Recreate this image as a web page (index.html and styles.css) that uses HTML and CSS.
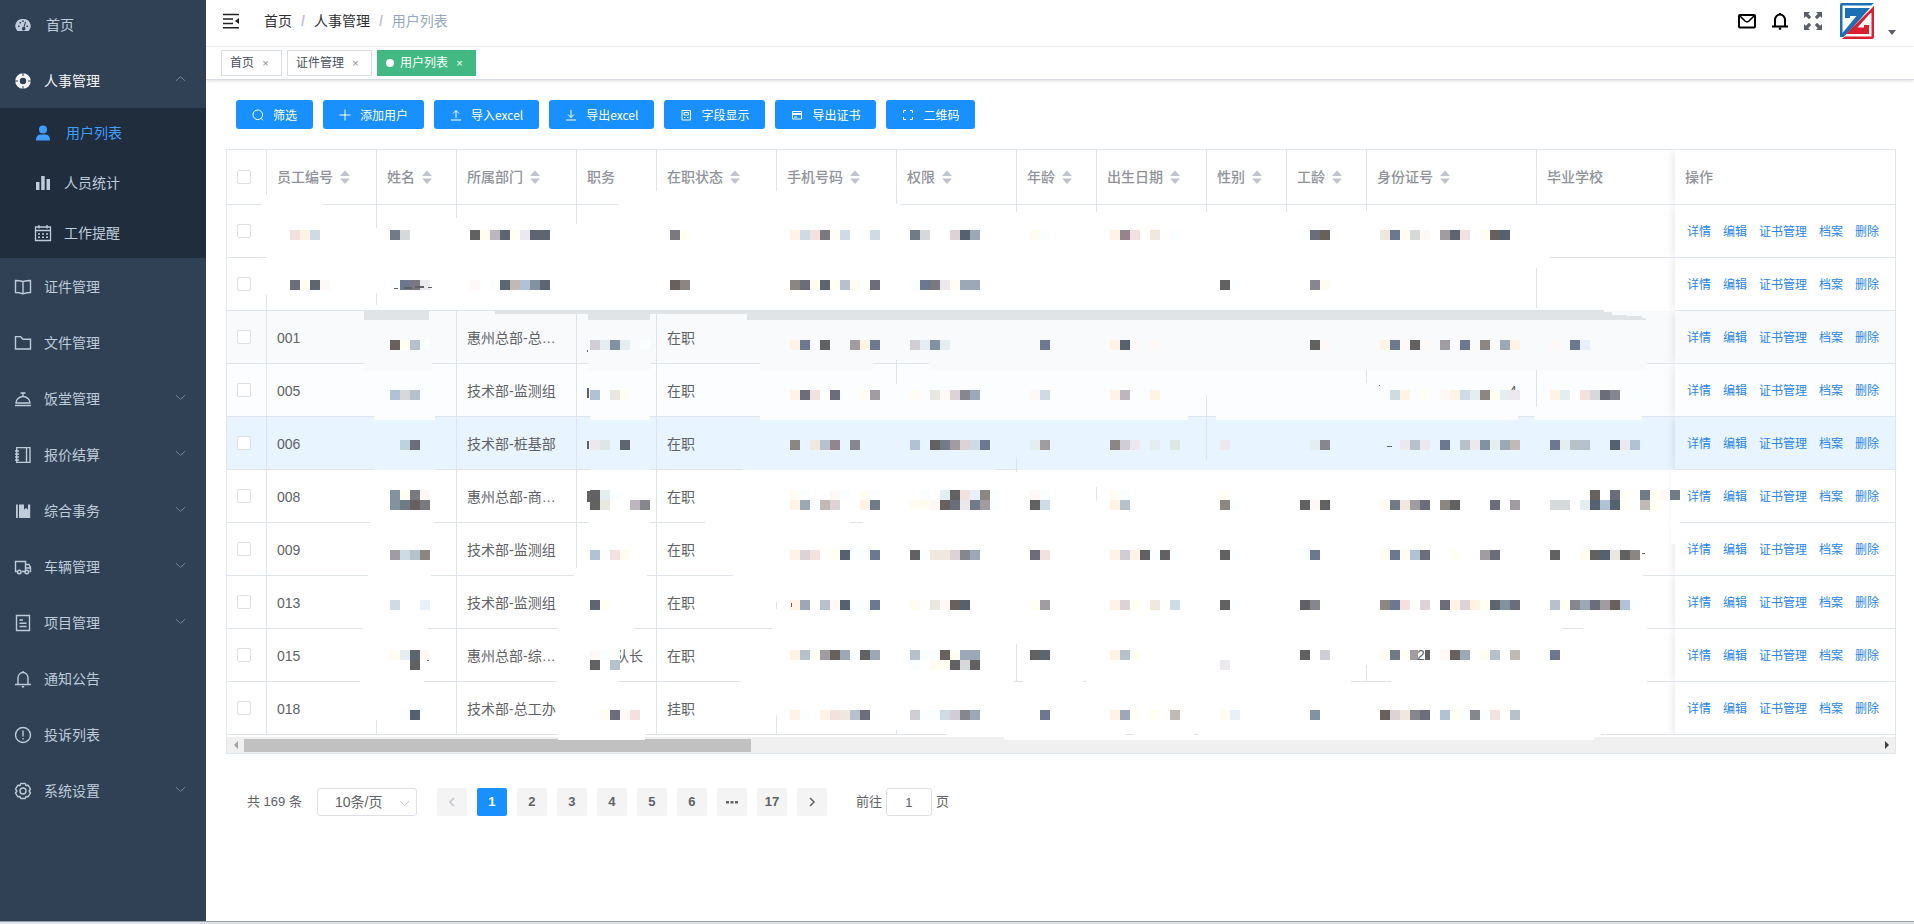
FILE: index.html
```html
<!DOCTYPE html>
<html lang="zh-CN">
<head>
<meta charset="utf-8">
<title>用户列表</title>
<link rel="stylesheet" href="styles.css">
</head>
<body>
<svg class="defs" aria-hidden="true">
  <symbol id="i-down" viewBox="0 0 12 12"><path d="M1 4l5 4.500 5-4.500" fill="none" stroke="currentColor"/></symbol>
  <symbol id="i-up" viewBox="0 0 12 12"><path d="M1 8l5-4.500 5 4.500" fill="none" stroke="currentColor"/></symbol>
  <symbol id="i-bell" viewBox="0 0 18 18"><path d="M1 14.500h16M4 14.500V8a5 5.500 0 0 1 10 0v6.500M9 1v1.500M7.800 16.800h2.400" fill="none" stroke="currentColor" stroke-width="var(--w,1.400)"/></symbol>
</svg>
<div class="app">
  <aside class="sidebar">
    <nav>
      <ul class="menu">
        <li><a class="item first" href="#"><svg class="ic" viewBox="0 0 18 18"><path fill="currentColor" fill-rule="evenodd" d="M9 3a7 7 0 0 0-6 11.500q.4.500 1 .500h10q.6 0 1-.5A7 7 0 0 0 9 3zM4 9.500h1.500V11H4zM5.500 6H7v1.500H5.500zM8.300 4.500h1.500V6H8.300zM12.500 9.500H14V11h-1.500zM11 5.500l1 .4-1.500 5.200a1.800 1.800 0 1 1-1-.2z"/></svg><span>首页</span></a></li>
        <li>
          <button class="item open"><svg class="ic" viewBox="0 0 18 18"><circle cx="9" cy="9" r="5.500" fill="none" stroke="currentColor" stroke-width="4.600"/><path d="M9 0v4M9 14v4M0 9h4M14 9h4" stroke="#304156" stroke-width="1"/></svg><span>人事管理</span><svg class="arr"><use href="#i-up"/></svg></button>
          <ul class="sub">
            <li><a class="active" href="#"><svg class="ic" viewBox="0 0 18 18"><circle cx="9" cy="5.500" r="4" fill="currentColor"/><path d="M2 16q0-5.500 5-5.500h4q5 0 5 5.500 0 .5-.6.500H2.600Q2 16.500 2 16z" fill="currentColor"/></svg><span>用户列表</span></a></li>
            <li><a href="#"><svg class="ic" viewBox="0 0 18 18"><path d="M2 8h3.500v8H2zM7.200 2h3.500v14H7.200zM12.500 5H16v11h-3.500z" fill="currentColor"/></svg><span>人员统计</span></a></li>
            <li><a href="#"><svg class="ic" viewBox="0 0 18 18"><path d="M1.500 3h15v13.500h-15zM1.500 6.500h15M5 1v3.500M13 1v3.500" fill="none" stroke="currentColor" stroke-width="1.300"/><path d="M4 10h10M4 13.300h10" stroke="currentColor" stroke-width="1.500" stroke-dasharray="2 2"/></svg><span>工作提醒</span></a></li>
          </ul>
        </li>
        <li><a class="item" href="#"><svg class="ic" viewBox="0 0 18 18"><path d="M9 3.500Q5 2.500 1.500 2.500v12Q5 14.500 9 15.800q4-1.300 7.500-1.300v-12Q13 2.500 9 3.500zv12" fill="none" stroke="currentColor" stroke-width="1.400"/></svg><span>证件管理</span></a></li>
        <li><a class="item" href="#"><svg class="ic" viewBox="0 0 18 18"><path d="M1.500 15V2.600h5L9 5.200h7.500V15z" fill="none" stroke="currentColor" stroke-width="1.400"/></svg><span>文件管理</span></a></li>
        <li><button class="item"><svg class="ic" viewBox="0 0 18 18"><path d="M1 15.500h16M2 13h14A7 6.500 0 0 0 2 13zM6.500 3h5M9 3v3.500" fill="none" stroke="currentColor" stroke-width="1.400"/></svg><span>饭堂管理</span><svg class="arr"><use href="#i-down"/></svg></button></li>
        <li><button class="item"><svg class="ic" viewBox="0 0 18 18"><path d="M2.700 1.600H16v14.800H2.700zM12.500 1.600v14.800M1 5h4M1 8h4M1 11h4M1 14h4" fill="none" stroke="currentColor" stroke-width="1.400"/></svg><span>报价结算</span><svg class="arr"><use href="#i-down"/></svg></button></li>
        <li><button class="item"><svg class="ic" viewBox="0 0 18 18"><path d="M2 2.500h1.800V16H2zM5 2.500h5v5l2-1.500 2 1.500v-5h2.200V16H5z" fill="currentColor"/></svg><span>综合事务</span><svg class="arr"><use href="#i-down"/></svg></button></li>
        <li><button class="item"><svg class="ic" viewBox="0 0 18 18"><path d="M3 13.500H1.500v-10h10v10H8M11.500 6.500H15l1.500 3v4h-1M11.500 10h5" fill="none" stroke="currentColor" stroke-width="1.400"/><circle cx="5.300" cy="14" r="1.800" fill="none" stroke="currentColor" stroke-width="1.400"/><circle cx="12.800" cy="14" r="1.800" fill="none" stroke="currentColor" stroke-width="1.400"/></svg><span>车辆管理</span><svg class="arr"><use href="#i-down"/></svg></button></li>
        <li><button class="item"><svg class="ic" viewBox="0 0 18 18"><path d="M2.500 1.500h13v15h-13zM5.500 6h3.500M5.500 9.300h7M5.500 12.500h7" fill="none" stroke="currentColor" stroke-width="1.400"/></svg><span>项目管理</span><svg class="arr"><use href="#i-down"/></svg></button></li>
        <li><a class="item" href="#"><svg class="ic"><use href="#i-bell"/></svg><span>通知公告</span></a></li>
        <li><a class="item" href="#"><svg class="ic" viewBox="0 0 18 18"><circle cx="9" cy="9" r="7.500" fill="none" stroke="currentColor" stroke-width="1.400"/><path d="M9 4.500v6M9 12v1.500" stroke="currentColor" stroke-width="1.400"/></svg><span>投诉列表</span></a></li>
        <li><button class="item"><svg class="ic" viewBox="0 0 18 18"><path d="M6.800 1.500h4.400l.8 2 2.200-.2 2.300 3.700-1.400 2 1.400 2-2.300 3.700-2.200-.2-.8 2H6.800l-.8-2-2.200.2L1.500 11l1.400-2-1.400-2 2.300-3.700 2.200.2z" fill="none" stroke="currentColor" stroke-width="1.400" stroke-linejoin="round"/><circle cx="9" cy="9" r="3" fill="none" stroke="currentColor" stroke-width="1.400"/></svg><span>系统设置</span><svg class="arr"><use href="#i-down"/></svg></button></li>
      </ul>
    </nav>
  </aside>
  <main class="main">
    <header class="navbar">
      <button class="plain" aria-label="收起菜单"><svg width="16" height="16" viewBox="0 0 16 16"><path d="M0 1.500h16M0 6h10M0 10.500h10M0 14.800h16" stroke="#222" stroke-width="1.500"/><path d="M16 5v6l-4-3z" fill="#222"/></svg></button>
      <nav class="crumbs"><a href="#">首页</a><i>/</i><a href="#">人事管理</a><i>/</i><span>用户列表</span></nav>
      <div class="tools">
        <button class="plain" aria-label="邮件"><svg width="18" height="18" viewBox="0 0 18 18"><rect x="1" y="3" width="16" height="12.500" rx="1" fill="none" stroke="#000" stroke-width="2"/><path d="M2 4l5 5q2 1.800 4 0l5-5" fill="none" stroke="#000" stroke-width="1.600"/></svg></button>
        <button class="plain bell" aria-label="通知"><svg width="18" height="18"><use href="#i-bell"/></svg></button>
        <button class="plain" aria-label="全屏"><svg width="18" height="18" viewBox="0 0 18 18" fill="#5a5e66"><path d="M0 0h6L4.200 1.800 7.200 5 5 7.200 1.800 4.200 0 6zM18 0h-6l1.800 1.800-3 3.200L13 7.200l3.200-3L18 6zM0 18h6l-1.800-1.800 3-3.200L5 10.800l-3.200 3L0 12zM18 18h-6l1.800-1.800-3-3.200 2.200-2.200 3.200 3L18 12z"/></svg></button>
        <button class="plain user" aria-label="用户菜单"><svg width="34" height="36" viewBox="0 0 34 36"><path d="M0 2Q0 0 2 0h32l-3 2.500H2.500V31L0 34z" fill="#1b6fb5"/><path d="M34 3v31q0 2-2 2H2l3-2.500h26.500V10H29z" fill="#d9202e"/><path d="M5 5h25L10 27.500 3.500 34H0v-1l16.500-20H10v2H5z" fill="#1b6fb5"/><path d="M34 3v3L17.500 24.500H24V22h5v9H6z" fill="#d9202e"/></svg><svg class="caret" width="8" height="5" viewBox="0 0 8 5"><path d="M0 0h8L4 5z" fill="#5a5e66"/></svg></button>
      </div>
    </header>
    <div class="tags">
      <a class="tag" href="#">首页<b>×</b></a>
      <a class="tag" href="#">证件管理<b>×</b></a>
      <a class="tag on" href="#">用户列表<b>×</b></a>
    </div>
    <section class="content">
      <div class="actions">
        <button><svg viewBox="0 0 12 12"><circle cx="5.800" cy="5.800" r="4.800"/><path d="M9 9.300l2 2"/></svg>筛选</button>
        <button><svg viewBox="0 0 12 12"><path d="M6 .5v11M.5 6h11"/></svg>添加用户</button>
        <button><svg viewBox="0 0 12 12"><path d="M1 11h10M6 9V1.500M3 4.500l3-3 3 3"/></svg>导入excel</button>
        <button><svg viewBox="0 0 12 12"><path d="M1 11h10M6 1v7.500M3 5.500l3 3 3-3"/></svg>导出excel</button>
        <button><svg viewBox="0 0 12 12"><path d="M2 1.500h8.500v9.500H2zM4 3.500h4.500v2.500H4zM4 8.500h1.500M7 8.500h1.500"/></svg>字段显示</button>
        <button><svg viewBox="0 0 12 12"><path d="M1.500 2.500h9v7.500h-9zM1 4.500h10M1 5.500h10M3 8h3"/></svg>导出证书</button>
        <button><svg viewBox="0 0 12 12"><path d="M1.500 4V1.500H4M8 1.500h2.500V4M10.500 8v2.500H8M4 10.500H1.500V8"/></svg>二维码</button>
      </div>
      <div class="grid">
        <table>
          <colgroup><col class="w40"><col class="w110"><col class="w80"><col class="w120"><col class="w80"><col class="w120"><col class="w120"><col class="w120"><col class="w80"><col class="w110"><col class="w80"><col class="w80"><col class="w170"><col><col class="w220"></colgroup>
          <thead><tr id="head"></tr></thead>
          <tbody id="rows"></tbody>
        </table>
        <svg class="mask" id="mask" width="1455" height="605" viewBox="226 149 1455 605" shape-rendering="crispEdges" aria-hidden="true"></svg>
        <div class="scroll"><span class="sa l"></span><span class="track"><span class="thumb"></span></span><span class="sa r"></span></div>
      </div>
      <div class="pager">
        <span>共 169 条</span>
        <span class="size"><select aria-label="每页条数"><option>10条/页</option></select><svg><use href="#i-down"/></svg></span>
        <div class="pages">
          <button aria-label="上一页" disabled><svg viewBox="0 0 12 12"><path d="M8 2L4 6l4 4"/></svg></button>
          <button class="cur">1</button><button>2</button><button>3</button><button>4</button><button>5</button><button>6</button>
          <button aria-label="更多"><svg viewBox="0 0 12 12"><path class="dots" d="M0 5h3v2.500H0zM4.500 5h3v2.500h-3zM9 5h3v2.500H9z"/></svg></button>
          <button>17</button>
          <button aria-label="下一页"><svg viewBox="0 0 12 12"><path d="M4 2l4 4-4 4"/></svg></button>
        </div>
        <label class="jump">前往<input type="text" value="1">页</label>
      </div>
    </section>
  </main>
</div>
<div class="edge"></div>
<script src="script.js"></script>
</body>
</html>
```

FILE: styles.css
```css
* { box-sizing: border-box; }
body { margin: 0; min-height: 100vh; display: flex; flex-direction: column; background: #fff; color: #606266; font: 14px/20px "Liberation Sans", "Noto Sans CJK SC", sans-serif; }
button, input, select { font: inherit; color: inherit; }
button { cursor: pointer; border: 0; background: none; padding: 0; }
a { color: inherit; text-decoration: none; }
ul { list-style: none; margin: 0; padding: 0; }
.defs { position: absolute; width: 0; height: 0; }
.app { flex: 1; display: flex; }
.sidebar { width: 206px; flex: none; background: #304156; color: #bfcbd9; }
.item { display: flex; align-items: center; width: 100%; height: 56px; padding: 1px 20px 0 14px; text-align: left; }
.item span { flex: 1; margin-left: 12px; }
.item.first { height: 52px; padding: 0 20px 2px 14px; }
.item.first span { margin-left: 14px; }
.item.open { color: #f4f4f5; }
.ic { width: 18px; height: 18px; flex: none; }
.arr { width: 11px; height: 12px; margin-bottom: 4px; color: #7f8b99; }
.sub { background: #1f2d3d; }
.sub a { display: flex; align-items: center; gap: 12px; height: 50px; padding: 0 0 0 34px; }
.sub .active { color: #409eff; }
.sub .active span { margin-left: 2px; }
.main { flex: 1; min-width: 0; }
.navbar { display: flex; align-items: center; height: 47px; padding: 0 18px 5px 17px; border-bottom: 1px solid #f0f1f2; color: #303133; }
.plain { display: flex; }
.crumbs { display: flex; margin-left: 25px; }
.crumbs i { margin: 0 9px; font-weight: bold; font-style: normal; color: #c0c4cc; }
.crumbs span { color: #97a8be; }
.tools { display: flex; align-items: center; gap: 15px; margin-left: auto; color: #000; }
.bell { --w: 2; }
.user { align-items: flex-end; gap: 14px; margin-left: 3px; }
.caret { margin-bottom: 4px; }
.tags { display: flex; gap: 5px; padding: 3px 15px; height: 33px; border-bottom: 1px solid #d8dce5; box-shadow: 0 1px 3px rgba(0,0,0,.12); font-size: 12px; color: #495060; }
.tag { display: flex; align-items: center; height: 26px; padding: 0 8px; border: 1px solid #d8dce5; }
.tag b { width: 17px; margin-left: 2px; padding-left: 2px; text-align: center; font-weight: normal; font-size: 11px; color: #8a8f99; }
.tag.on { background: #42b983; border-color: #42b983; color: #fff; }
.tag.on b { color: #fff; }
.tag.on::before { content: ""; width: 8px; height: 8px; border-radius: 50%; background: #fff; margin-right: 6px; }
.content { padding: 20px 18px 20px 20px; }
.actions { display: flex; gap: 10px; padding-left: 10px; margin-bottom: 20px; }
.actions button { display: flex; align-items: center; gap: 9px; height: 29px; padding: 0 16px; border-radius: 3px; background: #1890ff; color: #fff; font-size: 12px; font-family: "Noto Sans CJK SC", sans-serif; }
.actions svg { width: 12px; height: 12px; fill: none; stroke: #fff; }
.grid { position: relative; border: 1px solid #dfe6ec; }
table { width: 100%; table-layout: fixed; border-collapse: separate; border-spacing: 0; }
.w40 { width: 40px; } .w80 { width: 80px; } .w110 { width: 110px; } .w120 { width: 120px; } .w170 { width: 170px; } .w220 { width: 220px; }
th, td { padding: 0 10px; text-align: left; white-space: nowrap; overflow: hidden; }
th { height: 55px; border-bottom: 1px solid #dfe6ec; border-right: 1px solid #dfe6ec; color: #909399; font-weight: 500; }
th:nth-last-child(2), th:last-child { border-right: 0; }
th svg { width: 10px; height: 14px; margin-left: 7px; vertical-align: -2px; fill: #c0c4cc; }
td { height: 53px; }
td:first-child, td:last-child { border-bottom: 1px solid #dfe6ec; }
td:nth-child(4) { text-overflow: ellipsis; }
.hov1 { background: #f9fafc; } .hov2 { background: #fcfdff; } .hov3 { background: #e8f4ff; }
.ops { overflow: visible; box-shadow: 0 0 10px rgba(0,0,0,.12); clip-path: inset(0 0 0 -12px); }
td.ops { padding-left: 12px; }
td.ops a { margin-right: 12px; font-size: 12px; color: #2a86e8; }
input[type=checkbox] { appearance: none; display: block; width: 14px; height: 14px; margin: 0; border: 1px solid #dcdfe6; border-radius: 2px; background: #fff; }
.mask { position: absolute; left: -1px; top: -1px; pointer-events: none; }
.scroll { display: flex; height: 16px; margin-top: 2px; background: #f0f0f0; }
.sa { width: 17px; display: flex; align-items: center; justify-content: center; }
.sa::before { content: ""; border: 4px solid transparent; }
.sa.l::before { border-left-width: 0; border-right-color: #a0a0a0; }
.sa.r::before { border-right-width: 0; border-left-color: #404040; }
.track { flex: 1; padding: 2px 0 1px; }
.thumb { display: block; width: 31%; height: 13px; background: #c1c1c1; }
.pager { display: flex; align-items: center; margin-top: 34px; padding-left: 21px; font-size: 13px; }
.size { position: relative; margin: 0 20px 0 15px; }
.size select { appearance: none; width: 100px; height: 28px; padding: 0 24px 0 17px; border: 1px solid #dcdfe6; border-radius: 3px; background: #fff; font-size: 14px; }
.size svg { position: absolute; right: 7px; top: 9px; width: 11px; height: 12px; color: #c0c4cc; }
.pages { display: flex; gap: 10px; }
.pages button { width: 30px; height: 28px; border-radius: 2px; background: #f4f4f5; font-weight: bold; }
.pages .cur { background: #1890ff; color: #fff; }
.pages svg { width: 12px; height: 12px; display: block; margin: auto; fill: none; stroke: #606266; stroke-width: 1.500; }
.pages :disabled svg { stroke: #c0c4cc; }
.pages .dots { fill: #606266; stroke: none; }
.jump { display: flex; align-items: center; margin-left: 29px; }
.jump input { width: 46px; height: 28px; margin: 0 4px; padding: 0; border: 1px solid #dcdfe6; border-radius: 3px; text-align: center; }
.edge { height: 3px; background: #dfe1e8; border-top: 1px solid #9aa0a8; }
```

FILE: script.js
```js
// Column titles; a trailing "*" marks a sortable column.
const titles = ['员工编号*', '姓名*', '所属部门*', '职务', '在职状态*', '手机号码*', '权限*', '年龄*', '出生日期*', '性别*', '工龄*', '身份证号*', '毕业学校'];
const caret = '<svg viewBox="0 0 10 14"><path d="M0 6l5-5.500L10 6zM0 8.500l5 5.500 5-5.500z"/></svg>';
document.getElementById('head').innerHTML =
  '<th><input type="checkbox" aria-label="全选"></th>' +
  titles.map(t => '<th>' + t.replace('*', caret) + '</th>').join('') +
  '<th class="ops">操作</th>';

const people = [
  ['', '', '', ''], ['', '', '', ''],
  ['001', '惠州总部-总工办', '在职', 'hov1'], ['005', '技术部-监测组', '在职', 'hov2'],
  ['006', '技术部-桩基部', '在职', 'hov3'], ['008', '惠州总部-商务部', '在职', ''],
  ['009', '技术部-监测组', '在职', ''], ['013', '技术部-监测组', '在职', ''],
  ['015', '惠州总部-综合部', '在职', ''], ['018', '技术部-总工办', '挂职', '']
];
const links = ['详情', '编辑', '证书管理', '档案', '删除'].map(t => '<a href="#">' + t + '</a>').join('');
document.getElementById('rows').innerHTML = people.map(([id, dept, state, cls], n) =>
  `<tr class="${cls}"><td><input type="checkbox" aria-label="选择第${n + 1}行"></td><td>${id}</td><td></td><td>${dept}</td><td></td><td>${state}</td>` +
  '<td></td>'.repeat(8) + `<td class="ops">${links}</td></tr>`).join('');

// Redaction layer: blanked header edges, surviving rules, then 10px colour blocks.
const out = [];
const rect = (x, y, w, h, c) => out.push(`<rect x="${x}" y="${y}" width="${w}" height="${h}" fill="${c}"/>`);
const line = '#dfe4ea';
[[262, 195, 61, 10], [618, 191, 282, 14]].forEach(r => rect(...r, '#fff'));

const vertical = {
  266: [295, 735], 376: [205, 228, 293, 305, 720, 735], 456: [205, 218, 310, 735], 576: [205, 224, 313, 568],
  656: [313, 735], 776: [602, 609, 715, 735], 896: [191, 204, 360, 384, 730, 735],
  1016: [205, 212, 457, 472, 644, 682], 1096: [205, 212, 487, 501], 1206: [205, 212, 395, 460],
  1286: [205, 212], 1366: [205, 211, 368, 383, 665, 681], 1536: [268, 308, 369, 407]
};
const horizontal = {
  257: [226, 261, 1550, 1675], 310: [226, 780], 363: [226, 364, 432, 588, 650, 760, 873, 929, 1647, 1675],
  416: [226, 374, 435, 590, 650, 760, 1188, 1216, 1518, 1534, 1642, 1675],
  469: [226, 374, 435, 590, 650, 743, 995, 1019], 522: [226, 371, 434, 588, 650, 705, 850, 863],
  575: [226, 368, 431, 574, 647, 733, 1643, 1675], 628: [226, 363, 428, 558, 634, 772, 1562, 1583, 1647, 1675],
  681: [226, 360, 424, 557, 618, 741, 1014, 1023, 1083, 1086, 1351, 1391, 1647, 1675],
  734: [226, 558, 645, 947, 1125, 1134, 1194, 1199, 1601, 1675]
};
for (const x in vertical) for (let i = 0, v = vertical[x]; i < v.length; i += 2) rect(x, v[i], 1, v[i + 1] - v[i], line);
for (const y in horizontal) for (let i = 0, v = horizontal[y]; i < v.length; i += 2) rect(v[i], y, v[i + 1] - v[i], 1, line);

const band = '#e1e4e7';
[[364, 310, 65, 10], [495, 310, 285, 4], [588, 310, 62, 10], [747, 310, 857, 10], [1604, 312, 8, 8], [1612, 315, 14, 5], [1626, 316, 16, 4], [1642, 318, 4, 2]].forEach(r => rect(...r, band));
[[364, 363, 68, 7], [588, 363, 62, 7], [760, 363, 113, 7], [929, 363, 718, 7]].forEach(r => rect(...r, '#f9fafc'));
[[374, 417, 61, 3], [590, 417, 60, 3], [760, 417, 428, 3], [1216, 417, 302, 3], [1534, 417, 108, 3]].forEach(r => rect(...r, '#fcfdff'));
[[558, 730, 87, 10], [1004, 735, 590, 5], [1671, 470, 9, 74]].forEach(r => rect(...r, '#fff'));

const palette = {
  a: '#6b6e7a', b: '#5d6570', c: '#616161', d: '#717b87', e: '#9ca8b6', f: '#fef3e4', g: '#fffdf2', h: '#f3e1e0', i: '#cfdbe4',
  j: '#fafeff', k: '#b6c1cb', l: '#ddd2d5', m: '#8c8683', n: '#6c7890', o: '#67605c', p: '#a09ca2', q: '#e8e8e0', r: '#d6d9d9',
  s: '#8292a0', t: '#fef9f7', u: '#b2c2d6', v: '#fffff4', w: '#566170', x: '#86868f', y: '#e4eef0', z: '#d0cdd6',
  H: '#ebe8ee', J: '#e8f0fa', K: '#bcd3df', L: '#c0b9b6', M: '#938490', Q: '#f0e7de', X: '#79797f', Y: '#dde8e3', Z: '#bdb6c1'
};
const blocks = {
  230: '290hfi 390dr 470cgZbvHbb 670Xv 790fihXvi-ji 910dr--lwe 1030gj 1110fMh-Q-j 1300jao 1380Qngrt-pbh-gow',
  280: '290agbt 390jnXH 470t-jbLusb 670om 790magbvkg-a 910jnXHgee 1220cj 1310xg',
  340: '390ovkj 590zysy-j 790fn-c--pfn 910zysy 1040n 1110fwt-t 1310ct 1380fntct-p-n-m-ef 1550t-nJ',
  390: '390urk 590u-qg 790fah-a--gp 910g-qtlxe 1030ti 1110fZ--f 1390if-v-tfiymgyH 1550fy-hrax-j',
  440: '400Ka 590HY-b 790m-QkM-x 910u-cdplin 1030yp 1110mzH-y-Y 1220H 1310yx 1400HkH-n-kHsyeL 1550nykk--wHu',
  490: '390sgXt 590cyj 790gj--tj-gj 910-j-ychJmj 1030tj 1110gj 1220v 1590o-av-dvtd',
  500: '390sdoX 590cq--Zx 790fejLl--fd 910ggtoaHdpj 1030ci 1110fk 1220mj 1300ctc 1380gdQpa-mc---a-p 1550rr-ywuwv-Lv',
  550: '390pikm 590ujhg 790flh-vwjjn 910cjQQlxe 1030ah 1110fzfcjcj 1220cj 1300jn 1380gngua--v--pa 1550c--gcwqcm',
  600: '390i--J 590bv 790fe-ktwjjn 910g-qtow 1030vp 1110flv-Q-i 1220cj 1300cx 1380mnh-l-aflfvbsa 1550kvxeapouj',
  650: '390gybt 590tj 790fkvpoejce 910kjjogee 1030cb 1110fkv 1300c-z 1380gdvpc-toe-gk-L 1550n',
  660: '410c 590c-k 910j-ggcrc 1220H',
  710: '400jw 600gath 790fj-fhQka 910zjjizxe 1040n 1110fev-v-L 1220gJ 1310s 1380olQxa-uvjxjh-k'
};
// Glyph fragments left uncovered beside the blocks.
const label = (x, y, t) => out.push(`<text x="${x}" y="${y}" font-size="14" fill="#606266">${t}</text>`);
label(615, 661, '队长');
rect(610, 648, 10, 16, '#fff');
label(1509, 396, '4');
for (const y in blocks) for (const run of blocks[y].split(' ')) {
  const [, x, keys] = run.match(/^(\d+)(.*)$/);
  [...keys].forEach((k, i) => k !== '-' && rect(+x + i * 10, y, 10, 10, palette[k]));
}
rect(1418, 650, 7, 10, '#fff');
label(1417, 660, '2');
[[394, 288, 4, 1], [404, 287, 8, 2], [415, 286, 9, 2], [428, 287, 4, 1], [587, 350, 1, 2], [587, 388, 2, 10], [587, 441, 2, 8], [587, 491, 3, 11], [427, 660, 2, 1], [1387, 446, 5, 1], [1642, 553, 3, 1], [791, 603, 1, 4], [1379, 385, 1, 1]].forEach(r => rect(...r, '#606266'));
document.getElementById('mask').innerHTML = out.join('');
```
